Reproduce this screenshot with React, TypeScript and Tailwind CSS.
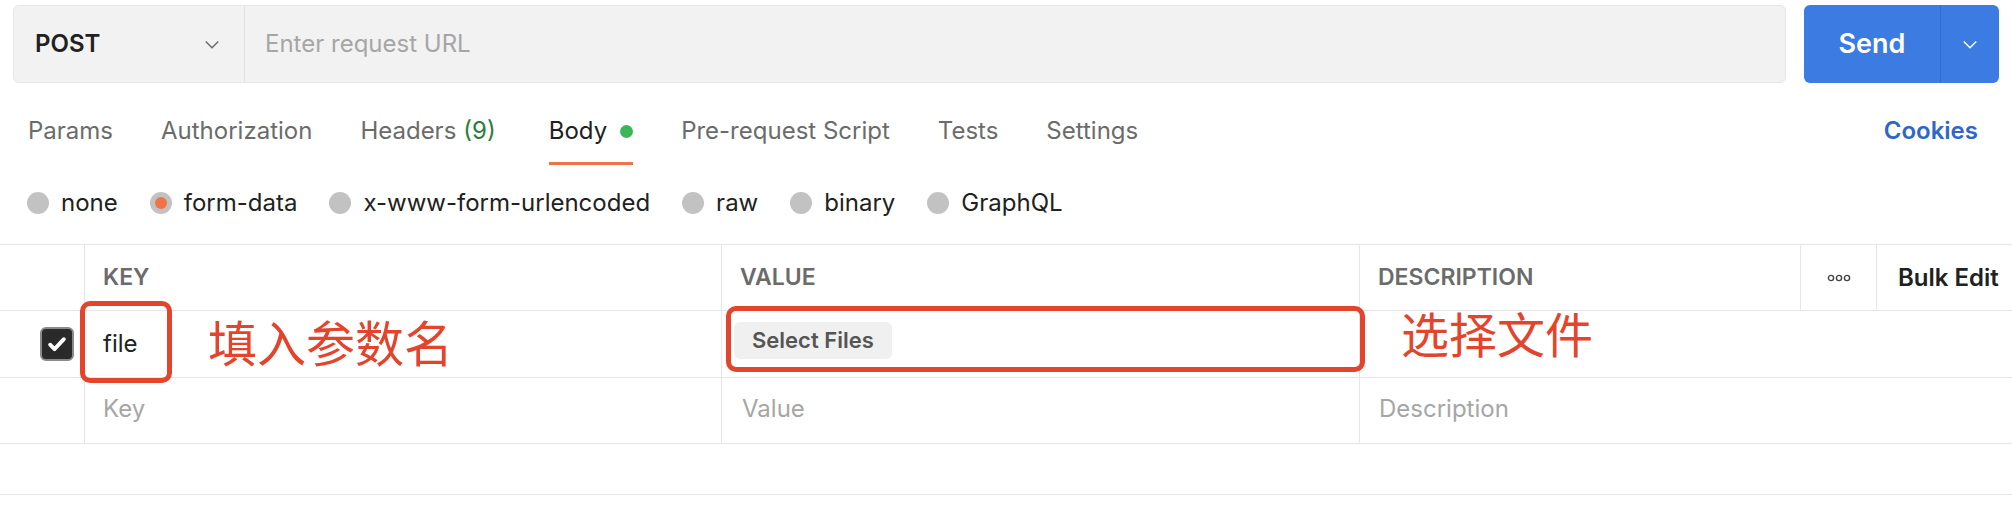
import React from "react";

const Chevron = ({ className }: { className?: string }) => (
  <svg viewBox="0 0 16 16" className={className} fill="none" stroke="currentColor" strokeWidth="1.2">
    <path d="M3 6l5 5 5-5" />
  </svg>
);

const tabs = [
  { label: "Params" },
  { label: "Authorization" },
  { label: "Headers", count: "(9)" },
  { label: "Body", active: true },
  { label: "Pre-request Script" },
  { label: "Tests" },
  { label: "Settings" },
];

const bodyTypes = ["none", "form-data", "x-www-form-urlencoded", "raw", "binary", "GraphQL"];

const Radio = ({ checked }: { checked?: boolean }) => (
  <span className="w-[22px] h-[22px] rounded-full bg-[#c2c2c2] flex items-center justify-center">
    {checked && <span className="w-[12px] h-[12px] rounded-full bg-[#ef7447]" />}
  </span>
);

export default function App() {
  return (
    <div className="w-[2012px] h-[508px] bg-white overflow-hidden font-['Inter','Noto_Sans',sans-serif] text-[#212121]">
      {/* request bar */}
      <div className="flex items-start pl-[13px] pt-[5px]">
        <div className="w-[1773px] h-[78px] flex rounded-[6px] border border-[#e6e6e6] bg-[#f2f2f2]">
          <div className="w-[231px] flex items-center justify-between pl-[21px] pr-[22px] border-r border-[#e2e2e2]">
            <span className="text-[24px] font-semibold">POST</span>
            <Chevron className="w-[20px] h-[20px] text-[#6b6b6b]" />
          </div>
          <div className="flex items-center pl-[20px] text-[24px] text-[#a6a6a6]">Enter request URL</div>
        </div>
        <div className="ml-[18px] w-[195px] h-[78px] rounded-[6px] bg-[#3b7be2] flex text-white">
          <div className="w-[136px] flex items-center justify-center text-[27px] font-semibold">Send</div>
          <div className="flex-1 flex items-center justify-center border-l border-[#2f6dd0]">
            <Chevron className="w-[20px] h-[20px]" />
          </div>
        </div>
      </div>

      {/* tabs */}
      <div className="flex items-start justify-between pt-[34px] pl-[28px] pr-[34px]">
        <div className="flex gap-[48px]">
          {tabs.map((t) => (
            <div key={t.label} className={`flex flex-col ${t.active ? "ml-[5px]" : ""}`}>
              <div className={`flex items-center h-[28px] text-[24px] ${t.active ? "text-[#212121]" : "text-[#6b6b6b]"}`}>
                {t.label}
                {t.count && <span className="ml-[7px] text-[#2a7d3a]">{t.count}</span>}
                {t.active && <span className="ml-[13px] w-[13px] h-[13px] rounded-full bg-[#3fb55a]" />}
              </div>
              <div className={`mt-[17px] h-[3px] ${t.active ? "bg-[#ee7347]" : "bg-transparent"}`} />
            </div>
          ))}
        </div>
        <div className="h-[28px] flex items-center text-[24px] font-semibold text-[#2f66c8]">Cookies</div>
      </div>

      {/* body type radios */}
      <div className="flex items-center gap-[32px] pl-[27px] mt-[24px] h-[28px]">
        {bodyTypes.map((b) => (
          <div key={b} className="flex items-center gap-[12px] text-[24px]">
            <Radio checked={b === "form-data"} />
            <span>{b}</span>
          </div>
        ))}
      </div>

      {/* table */}
      <div className="mt-[27px]">
        <div className="grid grid-cols-[85px_637px_638px_441px_76px_135px] h-[66px] border-t border-[#e6e6e6] text-[23px] font-semibold text-[#6b6b6b]">
          <div className="border-r border-[#e6e6e6]" />
          <div className="flex items-center pl-[18px] border-r border-[#e6e6e6]">KEY</div>
          <div className="flex items-center pl-[18px] border-r border-[#e6e6e6]">VALUE</div>
          <div className="flex items-center pl-[18px] border-r border-[#e6e6e6]">DESCRIPTION</div>
          <div className="flex items-center justify-center border-r border-[#e6e6e6]">
            <svg viewBox="0 0 24 8" className="w-[24px] h-[8px]" fill="none" stroke="#444" strokeWidth="1.4">
              <circle cx="4" cy="4" r="2.6" />
              <circle cx="12" cy="4" r="2.6" />
              <circle cx="20" cy="4" r="2.6" />
            </svg>
          </div>
          <div className="flex items-center pl-[21px] text-[24px] text-[#212121]">Bulk Edit</div>
        </div>

        <div className="grid grid-cols-[85px_637px_638px_1fr] h-[67px] border-t border-[#e6e6e6] text-[24px]">
          <div className="flex items-center justify-end pr-[10px] border-r border-[#e6e6e6]">
            <span className="w-[34px] h-[34px] rounded-[6px] bg-[#2a2a2a] border-2 border-[#8a8a8a] flex items-center justify-center">
              <svg viewBox="0 0 16 16" className="w-[22px] h-[22px]" fill="none" stroke="white" strokeWidth="2.8" strokeLinecap="round" strokeLinejoin="round">
                <path d="M3 8.5l3.2 3.2L13 4.5" />
              </svg>
            </span>
          </div>
          <div className="relative flex items-center pl-[18px] border-r border-[#e6e6e6]">
            file
            <div className="absolute left-[-5px] top-[-10px] w-[92px] h-[82px] rounded-[10px] border-[5px] border-[#e4442b]" />
            <span className="absolute left-[123px] top-[1px] text-[49px] leading-[58px] text-[#e4442b] font-['Noto_Sans_CJK_SC',sans-serif]">填入参数名</span>
          </div>
          <div className="relative flex items-start pt-[11px] pl-[12px] border-r border-[#e6e6e6]">
            <span className="h-[37px] px-[18px] flex items-center rounded-[6px] bg-[#f0f0f0] text-[22px] font-semibold text-[#555]">Select Files</span>
            <div className="absolute left-[4px] top-[-5px] w-[639px] h-[66px] rounded-[10px] border-[5px] border-[#e4442b]" />
          </div>
          <div className="relative">
            <span className="absolute left-[41px] top-[-8px] text-[48px] leading-[58px] text-[#e4442b] font-['Noto_Sans_CJK_SC',sans-serif]">选择文件</span>
          </div>
        </div>

        <div className="grid grid-cols-[85px_637px_638px_1fr] h-[66px] border-t border-[#e6e6e6] text-[24px] text-[#a6a6a6]">
          <div className="border-r border-[#e6e6e6]" />
          <div className="flex items-center pb-[4px] pl-[18px] border-r border-[#e6e6e6]">Key</div>
          <div className="flex items-center pb-[4px] pl-[20px] border-r border-[#e6e6e6]">Value</div>
          <div className="flex items-center pb-[4px] pl-[19px]">Description</div>
        </div>

        <div className="h-[52px] border-t border-b border-[#e6e6e6]" />
      </div>
    </div>
  );
}
